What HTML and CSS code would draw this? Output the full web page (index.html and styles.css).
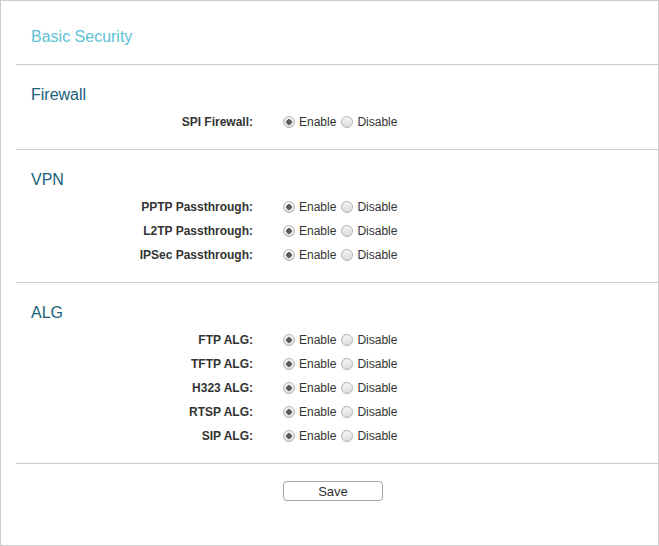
FILE: index.html
```html
<!DOCTYPE html>
<html lang="en">
  <head>
    <meta charset="UTF-8" />
    <title>Basic Security</title>
    <link rel="stylesheet" href="styles.css">
  </head>

  <body>
    <div class="panel">
      <div class="section title-section">
        <h2 class="page-title">Basic Security</h2>
      </div>

      <div class="section">
        <h3>Firewall</h3>
        <div class="row">
          <label class="row-label">SPI Firewall:</label>
          <div class="options">
            <input type="radio" name="spi" id="spi-on" checked />
            <label for="spi-on">Enable</label>
            <input type="radio" name="spi" id="spi-off" />
            <label for="spi-off">Disable</label>
          </div>
        </div>
      </div>

      <div class="section">
        <h3>VPN</h3>
        <div class="row">
          <label class="row-label">PPTP Passthrough:</label>
          <div class="options">
            <input type="radio" name="pptp" id="pptp-on" checked />
            <label for="pptp-on">Enable</label>
            <input type="radio" name="pptp" id="pptp-off" />
            <label for="pptp-off">Disable</label>
          </div>
        </div>
        <div class="row">
          <label class="row-label">L2TP Passthrough:</label>
          <div class="options">
            <input type="radio" name="l2tp" id="l2tp-on" checked />
            <label for="l2tp-on">Enable</label>
            <input type="radio" name="l2tp" id="l2tp-off" />
            <label for="l2tp-off">Disable</label>
          </div>
        </div>
        <div class="row">
          <label class="row-label">IPSec Passthrough:</label>
          <div class="options">
            <input type="radio" name="ipsec" id="ipsec-on" checked />
            <label for="ipsec-on">Enable</label>
            <input type="radio" name="ipsec" id="ipsec-off" />
            <label for="ipsec-off">Disable</label>
          </div>
        </div>
      </div>

      <div class="section">
        <h3>ALG</h3>
        <div class="row">
          <label class="row-label">FTP ALG:</label>
          <div class="options">
            <input type="radio" name="ftp" id="ftp-on" checked />
            <label for="ftp-on">Enable</label>
            <input type="radio" name="ftp" id="ftp-off" />
            <label for="ftp-off">Disable</label>
          </div>
        </div>
        <div class="row">
          <label class="row-label">TFTP ALG:</label>
          <div class="options">
            <input type="radio" name="tftp" id="tftp-on" checked />
            <label for="tftp-on">Enable</label>
            <input type="radio" name="tftp" id="tftp-off" />
            <label for="tftp-off">Disable</label>
          </div>
        </div>
        <div class="row">
          <label class="row-label">H323 ALG:</label>
          <div class="options">
            <input type="radio" name="h323" id="h323-on" checked />
            <label for="h323-on">Enable</label>
            <input type="radio" name="h323" id="h323-off" />
            <label for="h323-off">Disable</label>
          </div>
        </div>
        <div class="row">
          <label class="row-label">RTSP ALG:</label>
          <div class="options">
            <input type="radio" name="rtsp" id="rtsp-on" checked />
            <label for="rtsp-on">Enable</label>
            <input type="radio" name="rtsp" id="rtsp-off" />
            <label for="rtsp-off">Disable</label>
          </div>
        </div>
        <div class="row">
          <label class="row-label">SIP ALG:</label>
          <div class="options">
            <input type="radio" name="sip" id="sip-on" checked />
            <label for="sip-on">Enable</label>
            <input type="radio" name="sip" id="sip-off" />
            <label for="sip-off">Disable</label>
          </div>
        </div>
      </div>

      <div class="footer">
        <button type="button">Save</button>
      </div>
    </div>
  </body>
</html>
```

FILE: styles.css
```css
* {
  margin: 0;
  padding: 0;
  box-sizing: border-box;
  font-family: "Liberation Sans", Arial, sans-serif;
}

body {
  background: #fff;
}

.panel {
  width: 659px;
  height: 546px;
  border: 1px solid #ccc;
}

.section {
  margin-left: 15px;
  padding: 20px 0 15px 15px;
  border-bottom: 1px solid #ccc;
}

.title-section {
  padding-top: 26px;
  padding-bottom: 17px;
}

.page-title {
  font-size: 16px;
  font-weight: normal;
  line-height: 20px;
  color: #5bc2d3;
}

h3 {
  font-size: 16px;
  font-weight: normal;
  line-height: 20px;
  color: #17607a;
  margin-bottom: 5px;
}

.row {
  display: flex;
  align-items: center;
  height: 24px;
  font-size: 12px;
  color: #333;
}

.row-label {
  width: 222px;
  text-align: right;
  font-weight: bold;
}

.options {
  display: flex;
  align-items: center;
  margin-left: 30px;
}

.options label {
  margin-right: 5px;
}

input[type="radio"] {
  appearance: none;
  width: 12px;
  height: 12px;
  margin-right: 4px;
  border: 1px solid #b4b4b4;
  border-radius: 50%;
  background: linear-gradient(#f4f4f4, #dcdcdc);
}

input[type="radio"]:checked {
  background: radial-gradient(circle, #5a5a5a 0, #5a5a5a 2.5px, transparent 3px),
    linear-gradient(#f4f4f4, #dcdcdc);
}

.footer {
  padding: 17px 0 0 282px;
}

button {
  width: 100px;
  height: 20px;
  border: 1px solid #a6a6a6;
  border-radius: 4px;
  background: #fff;
  color: #333;
  font-size: 13px;
}
```
